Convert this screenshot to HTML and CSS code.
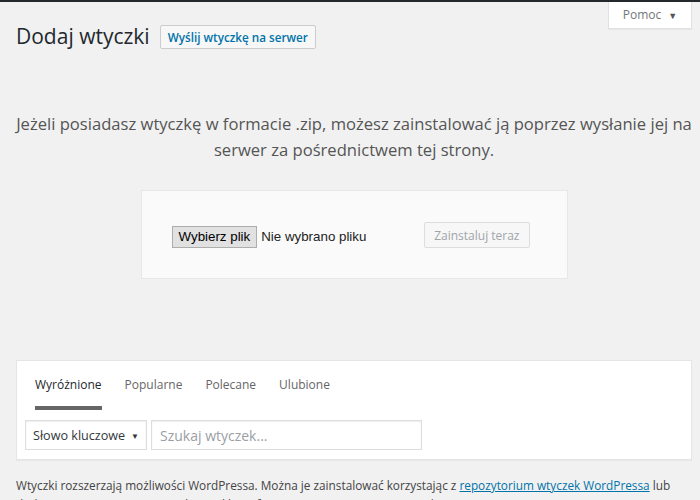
FILE: index.html
```html
<!DOCTYPE html>
<html lang="pl">
<head>
    <meta charset="UTF-8">
    <meta name="viewport" content="width=device-width, initial-scale=1.0">
    <title>Dodaj wtyczki</title>
    <link rel="stylesheet" href="styles.css">
</head>
<body>
    <div class="admin-bar"></div>
    <div class="wrap">
        <div class="screen-meta">
            <button class="help-tab">Pomoc <span class="arrow">&#9660;</span></button>
        </div>
        <div class="page-head">
            <h1>Dodaj wtyczki</h1>
            <button class="title-action">Wyślij wtyczkę na serwer</button>
        </div>

        <p class="install-help">Jeżeli posiadasz wtyczkę w formacie .zip, możesz zainstalować ją poprzez wysłanie jej na serwer za pośrednictwem tej strony.</p>

        <div class="upload-form">
            <button class="file-btn">Wybierz plik</button>
            <span class="file-name">Nie wybrano pliku</span>
            <button class="install-btn" disabled>Zainstaluj teraz</button>
        </div>

        <div class="wp-filter">
            <ul class="filter-links">
                <li><a href="#" class="current">Wyróżnione</a></li>
                <li><a href="#">Popularne</a></li>
                <li><a href="#">Polecane</a></li>
                <li><a href="#">Ulubione</a></li>
            </ul>
            <div class="search-form">
                <div class="select">Słowo kluczowe <span class="arrow">&#9660;</span></div>
                <input type="search" class="search-input" placeholder="Szukaj wtyczek...">
            </div>
        </div>

        <p class="plugins-info">Wtyczki rozszerzają możliwości WordPressa. Można je zainstalować korzystając z <a href="#">repozytorium wtyczek WordPressa</a> lub dodając je ręcznie poprzez wysłanie pliku w formacie .zip za pomocą przycisku powyżej.</p>
    </div>
</body>
</html>
```

FILE: styles.css
```css
body {
    margin: 0;
    background: #f1f1f1;
    color: #444;
    font-family: "Open Sans", sans-serif;
    font-size: 13px;
}

.admin-bar {
    height: 2px;
    background: #23282d;
}

.wrap {
    padding: 0 8px 0 16px;
}

.screen-meta {
    float: right;
}

.help-tab {
    width: 84px;
    height: 27px;
    background: #fff;
    border: 1px solid #e1e1e1;
    border-top: none;
    box-shadow: 0 1px 1px rgba(0, 0, 0, 0.04);
    color: #72777c;
    font-family: inherit;
    font-size: 12px;
    padding: 0 0 2px 0;
}

.help-tab .arrow {
    font-size: 9px;
    margin-left: 4px;
    color: #555;
}

.page-head {
    display: flex;
    align-items: center;
    gap: 10px;
    padding-top: 20px;
}

h1 {
    margin: 0;
    font-size: 21px;
    font-weight: 400;
    color: #23282d;
    line-height: 29px;
}

.title-action {
    height: 24px;
    padding: 0 7px;
    background: #f7f7f7;
    border: 1px solid #ccc;
    border-radius: 2px;
    color: #0073aa;
    font-family: inherit;
    font-size: 11.7px;
    font-weight: 600;
}

.install-help {
    margin: 60px 0 0;
    text-align: center;
    font-size: 16.6px;
    line-height: 26px;
    color: #555;
}

.upload-form {
    width: 427px;
    box-sizing: border-box;
    margin: 27px auto 0;
    padding: 31px 37px 30px 30px;
    background: #fafafa;
    border: 1px solid #e7e7e7;
    display: flex;
    align-items: center;
}

.file-btn {
    font-family: "Liberation Sans", Arial, sans-serif;
    font-size: 13.33px;
    color: #000;
    background: #e1e1e1;
    border: 1px solid #adadad;
    padding: 2px 6px;
    height: 22px;
    margin-top: 3px;
}

.file-name {
    font-family: "Liberation Sans", Arial, sans-serif;
    font-size: 13.33px;
    color: #222;
    margin: 3px 0 0 4px;
}

.install-btn {
    margin-left: auto;
    height: 26px;
    padding: 0 9px;
    background: #f7f7f7;
    border: 1px solid #ddd;
    border-radius: 2px;
    color: #a0a5aa;
    font-family: inherit;
    font-size: 12px;
}

.wp-filter {
    margin-top: 81px;
    background: #fff;
    border: 1px solid #e5e5e5;
    box-shadow: 0 1px 1px rgba(0, 0, 0, 0.04);
    padding: 0 8px 9px;
}

.filter-links {
    list-style: none;
    margin: 0;
    padding: 0;
    display: flex;
    gap: 23px;
    padding-left: 10px;
}

.filter-links a {
    display: block;
    padding: 15px 0 12px;
    color: #666;
    text-decoration: none;
    font-size: 12px;
    line-height: 18px;
    border-bottom: 4px solid transparent;
}

.filter-links a.current {
    color: #23282d;
    border-bottom-color: #666;
}

.search-form {
    display: flex;
    gap: 4px;
    margin-top: 10px;
}

.select {
    width: 122px;
    height: 30px;
    box-sizing: border-box;
    border: 1px solid #ddd;
    padding: 0 7px;
    display: flex;
    align-items: center;
    justify-content: space-between;
    white-space: nowrap;
    color: #32373c;
    font-size: 12.6px;
    box-shadow: inset 0 1px 2px rgba(0, 0, 0, 0.07);
}

.select .arrow {
    font-size: 8px;
}

.search-input {
    width: 271px;
    height: 30px;
    box-sizing: border-box;
    border: 1px solid #ddd;
    padding: 0 8px;
    font-family: inherit;
    font-size: 14px;
    box-shadow: inset 0 1px 2px rgba(0, 0, 0, 0.07);
}

.search-input::placeholder {
    color: #9aa0a5;
}

.plugins-info {
    margin: 16px 0 0;
    font-size: 11.8px;
    line-height: 19px;
    color: #444;
}

.plugins-info a {
    color: #0073aa;
}
```
